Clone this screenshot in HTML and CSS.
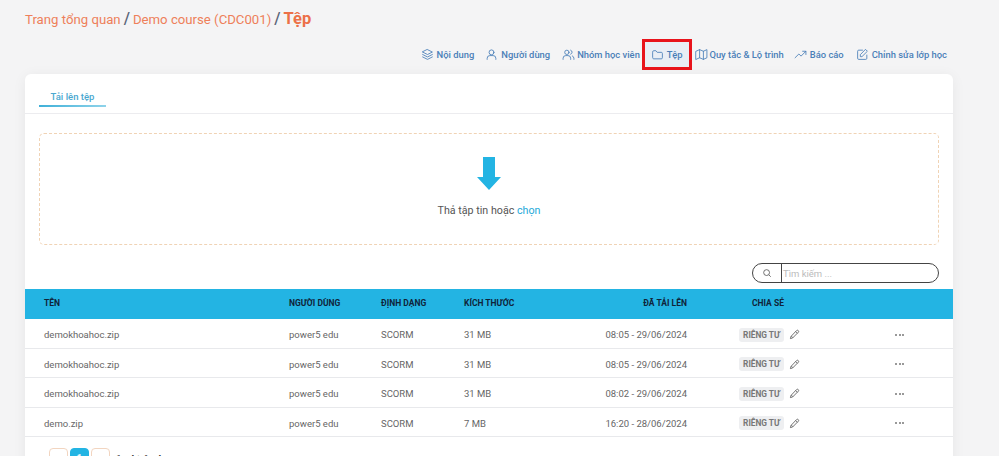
FILE: index.html
```html
<!DOCTYPE html>
<html lang="vi">
<head>
<meta charset="utf-8">
<title>Tệp</title>
<link rel="stylesheet" href="styles.css">
</head>
<body>
<svg class="defs" width="0" height="0"><defs>
<symbol id="i-pen" viewBox="0 0 24 24"><path d="M16.500 3.500a2.600 2.600 0 0 1 3.700 3.700L8 19.500 3 21l1.500-5z M14.500 5.500l4 4 M5 15.500l3.500 3.500" fill="none" stroke="currentColor" stroke-width="2" stroke-linejoin="round"/></symbol>
</defs></svg>
<header class="crumbs"><span class="crumb">Trang tổng quan</span><span class="sep">/</span><span class="crumb">Demo course (CDC001)</span><span class="sep">/</span><strong class="current">Tệp</strong></header>
<nav class="actions">
<a class="act"><svg viewBox="0 0 24 24"><path d="M12 3l9 4.500-9 4.500-9-4.500z M3 12l9 4.500 9-4.500 M3 16.500l9 4.500 9-4.500"/></svg>Nội dung</a>
<a class="act nudge"><svg viewBox="0 0 24 24"><circle cx="12" cy="8" r="4.500"/><path d="M4 21v-2a5 5 0 0 1 5-5h6a5 5 0 0 1 5 5v2"/></svg>Người dùng</a>
<a class="act snug"><svg viewBox="0 0 24 24"><circle cx="9" cy="8" r="4"/><path d="M2 21v-2a5 5 0 0 1 5-5h4a5 5 0 0 1 5 5v2 M16 4a4 4 0 0 1 0 7.500 M19 14.500a5 5 0 0 1 3 4.500v2"/></svg>Nhóm học viên</a>
<a class="act hl"><svg viewBox="0 0 24 24"><path d="M3 7a2 2 0 0 1 2-2h4l2.500 3H19a2 2 0 0 1 2 2v8a2 2 0 0 1-2 2H5a2 2 0 0 1-2-2z"/></svg>Tệp</a>
<a class="act tight"><svg viewBox="0 0 24 24"><path d="M2 6l6.500-3 7 3L22 3v15l-6.500 3-7-3L2 21z M8.500 3v15 M15.500 6v15"/></svg>Quy tắc &amp; Lộ trình</a>
<a class="act pull"><svg viewBox="0 0 24 24"><path d="M2 18l7-7 4 4 9-9 M16 6h6v6"/></svg>Báo cáo</a>
<a class="act"><svg viewBox="0 0 24 24"><path d="M20 13v6a2 2 0 0 1-2 2H5a2 2 0 0 1-2-2V6a2 2 0 0 1 2-2h7 M18 3l3 3-10 10H8v-3z"/></svg>Chỉnh sửa lớp học</a>
</nav>
<main class="card">
<div class="tabs"><span class="tab">Tải lên tệp</span></div>
<section class="drop">
<svg class="arrow" viewBox="0 0 24 33"><path d="M6 0h12v20h6L12 33 0 20h6z"/></svg>
<p class="drop-text">Thả tập tin hoặc <span class="pick">chọn</span></p>
</section>
<div class="search-row"><div class="search"><span class="search-ic"><svg viewBox="0 0 24 24"><circle cx="11" cy="11" r="7"/><path d="M16.500 16.500L21 21"/></svg></span><span class="search-ph">Tìm kiếm ...</span></div></div>
<div class="table">
<div class="row head"><span>TÊN</span><span>NGƯỜI DÙNG</span><span>ĐỊNH DẠNG</span><span>KÍCH THƯỚC</span><span class="date">ĐÃ TẢI LÊN</span><span class="share">CHIA SẺ</span><span></span></div>
<div class="row"><span>demokhoahoc.zip</span><span>power5 edu</span><span>SCORM</span><span>31 MB</span><span class="date">08:05 - 29/06/2024</span><span class="share"><b class="badge">RIÊNG TƯ</b><svg class="pen"><use href="#i-pen"/></svg></span><span class="more"><i></i><i></i><i></i></span></div>
<div class="row"><span>demokhoahoc.zip</span><span>power5 edu</span><span>SCORM</span><span>31 MB</span><span class="date">08:05 - 29/06/2024</span><span class="share"><b class="badge">RIÊNG TƯ</b><svg class="pen"><use href="#i-pen"/></svg></span><span class="more"><i></i><i></i><i></i></span></div>
<div class="row"><span>demokhoahoc.zip</span><span>power5 edu</span><span>SCORM</span><span>31 MB</span><span class="date">08:02 - 29/06/2024</span><span class="share"><b class="badge">RIÊNG TƯ</b><svg class="pen"><use href="#i-pen"/></svg></span><span class="more"><i></i><i></i><i></i></span></div>
<div class="row"><span>demo.zip</span><span>power5 edu</span><span>SCORM</span><span>7 MB</span><span class="date">16:20 - 28/06/2024</span><span class="share"><b class="badge">RIÊNG TƯ</b><svg class="pen"><use href="#i-pen"/></svg></span><span class="more"><i></i><i></i><i></i></span></div>
</div>
<div class="pager"><span class="pg">‹</span><span class="pg on">1</span><span class="pg">›</span><span class="count">1 - 4 trên 4</span></div>
</main>
</body>
</html>
```
FILE: styles.css
```css
html, body { margin: 0; height: 456px; overflow: hidden; }
body { background: #f4f4f5; font-family: Roboto, "Noto Sans", sans-serif; color: #555; }
.defs { position: absolute; }
.crumbs { display: flex; align-items: baseline; padding: 10px 0 0 25px; height: 24px; font-size: 13.200px; line-height: 18px; color: #ee7f5a; }
.sep { margin: 0 3px; color: #5a6478; font-size: 16px; font-weight: 500; }
.current { font-size: 16.500px; font-weight: 700; color: #ec7047; }
.actions { display: flex; justify-content: flex-end; align-items: center; gap: 12px; margin-top: 5px; padding-right: 52px; height: 31px; }
.act { box-sizing: border-box; display: flex; align-items: center; gap: 3px; padding-bottom: 1px; font-size: 9.400px; font-weight: 500; color: #4a7fb8; white-space: nowrap; }
.act svg { flex: none; width: 13px; height: 13px; fill: none; stroke: currentColor; stroke-width: 1.600; stroke-linejoin: round; stroke-linecap: round; }
.nudge { margin-left: -1px; }
.snug { gap: 2px; margin-right: -1px; }
.tight { gap: 1px; }
.pull { margin-left: -2px; }
.hl { height: 31px; padding: 0 7px 1px 6px; background: #e9eef5; border: 3px solid #e8141c; margin: 0 -9px; }
.card { margin: 4px 46px 0 25px; background: #fff; border-radius: 6px; box-shadow: 0 2px 14px rgba(0,0,0,.06); height: 400px; }
.tabs { height: 39px; padding: 0 14px; border-bottom: 1px solid #ececef; display: flex; }
.tab { box-sizing: border-box; width: 67px; height: 33px; padding-top: 17px; text-align: center; font-size: 9.500px; line-height: 12px; font-weight: 500; color: #4aa8d0; background: linear-gradient(90deg, #3fb0d8, #8fd3ea) left bottom / 100% 2px no-repeat; }
.drop { box-sizing: border-box; margin: 19px 14px 0; height: 112px; border: 1px dashed #f0d3b5; border-radius: 5px; display: flex; flex-direction: column; align-items: center; padding-top: 23px; }
.arrow { width: 24px; height: 33px; fill: #23b4e3; }
.drop-text { margin: 14px 0 0; font-size: 10.700px; line-height: 14px; color: #555; }
.pick { color: #23a9d9; }
.search-row { display: flex; justify-content: flex-end; padding: 18px 14px 0 0; }
.search { box-sizing: border-box; width: 187px; height: 20px; border: 1px solid #444; border-radius: 10px; display: flex; align-items: center; }
.search-ic { box-sizing: border-box; width: 29px; height: 18px; border-right: 1px solid #444; display: flex; align-items: center; justify-content: center; }
.search-ic svg { width: 10px; height: 10px; fill: none; stroke: #555; stroke-width: 2; }
.search-ph { padding-left: 1px; font-size: 9.500px; color: #bbb; }
.table { margin-top: 6px; }
.row { box-sizing: border-box; display: grid; grid-template-columns: 245px 92px 83px 85px 138px 207px 1fr; align-items: center; height: 29.500px; padding: 3px 0 0 19px; border-bottom: 1px solid #e8e9ec; font-size: 9.500px; color: #666; }
.row.head { height: 30px; padding: 0 0 2px 19px; background: #23b4e3; border-bottom: 0; font-size: 8.500px; font-weight: 700; color: #10243a; }
.row span { white-space: nowrap; }
.date { text-align: right; }
.row .share { display: flex; align-items: center; padding-left: 52px; }
.row.head .share { padding-left: 65px; }
.badge { box-sizing: border-box; flex: none; width: 45px; height: 14px; margin-right: 5px; border-radius: 3px; background: #eeeff1; font-size: 8.300px; line-height: 14px; font-weight: 700; text-align: center; color: #777; }
.pen { width: 11px; height: 11px; color: #666; }
.more { display: flex; gap: 1.500px; padding-left: 1px; }
.more i { width: 2px; height: 2px; border-radius: 50%; background: #777; }
.pager { display: flex; align-items: center; gap: 2px; padding: 11px 0 0 24px; font-size: 9.500px; font-weight: 500; color: #333; }
.pg { box-sizing: border-box; width: 19px; height: 20px; border: 1px solid #f2d5c0; border-radius: 4px; text-align: center; line-height: 18px; }
.pg.on { background: #23b4e3; border-color: #23b4e3; color: #fff; }
.count { margin-left: 4px; }
```
